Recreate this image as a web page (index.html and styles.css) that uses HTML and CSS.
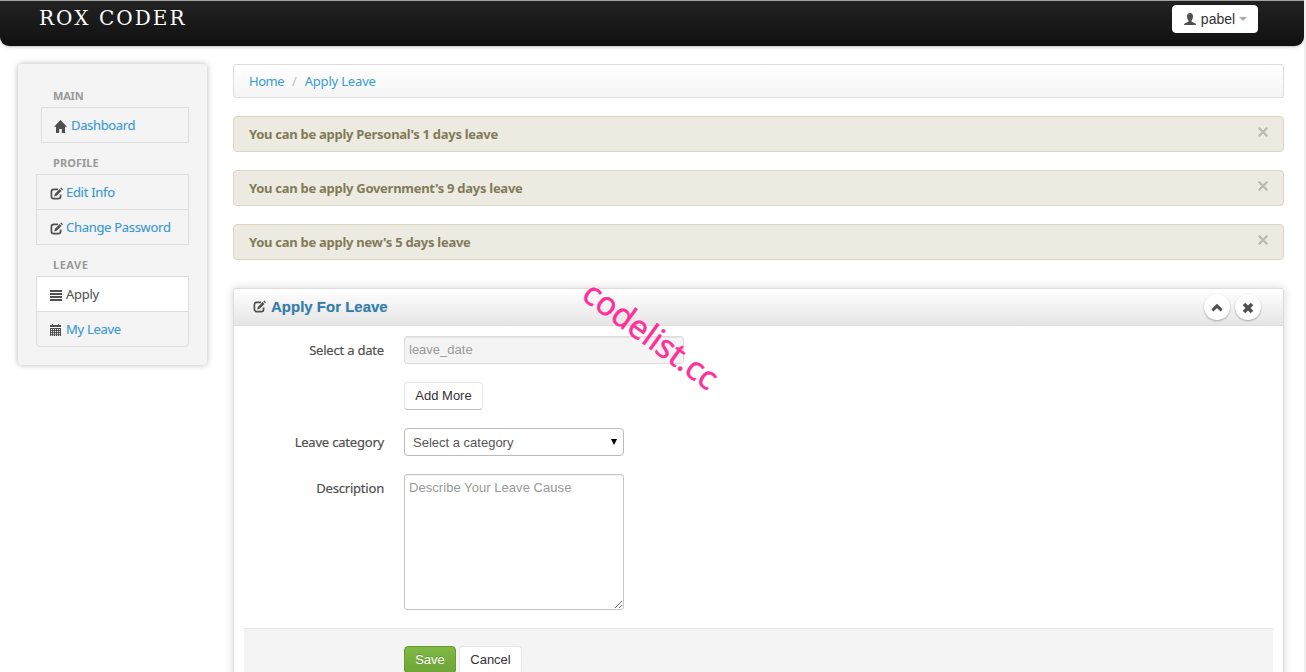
FILE: index.html
```html
<!DOCTYPE html>
<html lang="en">
<head>
<meta charset="utf-8">
<title>Apply Leave</title>
<link rel="stylesheet" href="styles.css">
</head>
<body>
<svg class="defs" width="0" height="0">
  <symbol id="edit" viewBox="0 0 14 14"><path d="M8 2.400H3.800Q1.400 2.400 1.400 4.800v4.400q0 2.400 2.400 2.400h4.400q2.400 0 2.400-2.400V7.500" fill="none" stroke="currentColor" stroke-width="1.700"/><path d="M4.200 9.500l.6-2.500 4.900-4.900 1.800 1.800-4.900 4.900zM10.300 1.400l.9-.9 1.800 1.800-.9.900z" fill="currentColor"/></symbol>
  <symbol id="home" viewBox="0 0 14 14"><path d="M6.500 0L13 6.800h-2V13H7.800V9H5.200v4H2V6.800H0z" fill="currentColor"/></symbol>
  <symbol id="list" viewBox="0 0 14 14"><path d="M0 1h12v2H0zM0 4h12v2H0zM0 7h12v2H0zM0 10h12v2H0z" fill="currentColor"/></symbol>
  <symbol id="calendar" viewBox="0 0 14 14"><path d="M0 1h2V0h1v1h5V0h1v1h2v2H0zM0 4h11v8H0z" fill="currentColor"/><path d="M1 5.500h9M1 7.500h9M1 9.500h9M1 11.300h9" stroke="#f4f4f4" stroke-width="1" stroke-dasharray="1 1"/></symbol>
  <symbol id="user" viewBox="0 0 14 14"><path d="M3 3.500Q3 0 6 0t3 3.500Q9 6 7.600 7.500v1.300l3.400 1.400q1 .4 1 1.800H0q0-1.400 1-1.800l3.400-1.400V7.500Q3 6 3 3.500z" fill="currentColor"/></symbol>
  <symbol id="up" viewBox="0 0 14 14"><path d="M2.400 9.300L7 4.900l4.600 4.400" fill="none" stroke="currentColor" stroke-width="3"/></symbol>
  <symbol id="remove" viewBox="0 0 14 14"><path d="M3 3l8 8M11 3l-8 8" fill="none" stroke="currentColor" stroke-width="3.700"/></symbol>
  <symbol id="close" viewBox="0 0 10 10"><path d="M.7.700l8.600 8.600M9.300.7L.7 9.300" fill="none" stroke="currentColor" stroke-width="2.200"/></symbol>
</svg>
<div class="page">
  <header class="navbar">
    <a class="brand">ROX CODER</a>
    <button class="btn user-btn"><svg class="icon"><use href="#user"/></svg><span>pabel</span><i class="caret"></i></button>
  </header>
  <div class="columns">
    <nav class="sidebar">
      <h6>MAIN</h6>
      <ul class="menu inset"><li><a class="w-dash"><svg class="icon"><use href="#home"/></svg>Dashboard</a></li></ul>
      <h6 class="wide">PROFILE</h6>
      <ul class="menu">
        <li><a><svg class="icon"><use href="#edit"/></svg>Edit Info</a></li>
        <li><a><svg class="icon"><use href="#edit"/></svg>Change Password</a></li>
      </ul>
      <h6 class="wider">LEAVE</h6>
      <ul class="menu last">
        <li class="active"><a><svg class="icon"><use href="#list"/></svg>Apply</a></li>
        <li><a><svg class="icon"><use href="#calendar"/></svg>My Leave</a></li>
      </ul>
    </nav>
    <main class="content">
      <div class="breadcrumb"><a class="crumb-home">Home</a><span>/</span><a>Apply Leave</a></div>
      <div class="alert"><strong>You can be apply Personal's 1 days leave</strong><svg class="close"><use href="#close"/></svg></div>
      <div class="alert"><strong>You can be apply Government's 9 days leave</strong><svg class="close"><use href="#close"/></svg></div>
      <div class="alert"><strong>You can be apply new's 5 days leave</strong><svg class="close"><use href="#close"/></svg></div>
      <section class="box">
        <div class="box-header">
          <h2><svg class="icon"><use href="#edit"/></svg>Apply For Leave</h2>
          <div class="box-tools"><button class="round"><svg class="icon"><use href="#up"/></svg></button><button class="round"><svg class="icon"><use href="#remove"/></svg></button></div>
        </div>
        <form class="form">
          <div class="row"><label>Select a date</label><input class="field date" placeholder="leave_date" readonly></div>
          <div class="row"><label></label><button type="button" class="btn add">Add More</button></div>
          <div class="row"><label>Leave category</label><div class="field select"><span>Select a category</span><i class="arrow"></i></div></div>
          <div class="row"><label>Description</label><textarea class="field area" placeholder="Describe Your Leave Cause"></textarea></div>
          <div class="actions"><button type="button" class="btn save">Save</button><button type="button" class="btn cancel">Cancel</button></div>
        </form>
      </section>
    </main>
  </div>
  <div class="watermark">codelist.cc</div>
</div>
</body>
</html>
```
FILE: styles.css
```css
* { box-sizing: border-box; }
html { overflow: hidden; background: #f0f0f0; }
body { margin: 0; height: 672px; overflow: hidden; font: 13px/18px "Noto Sans", sans-serif; color: #555; }
.defs { position: absolute; }
.page { position: relative; width: 1304px; height: 672px; overflow: hidden; background: #fff; border-top: 1px solid #a3a3a3; }
.icon { width: 14px; height: 14px; flex: none; color: #505050; }
.navbar { display: flex; justify-content: space-between; align-items: flex-start; height: 45px; padding: 4px 46px 0 39px; background: linear-gradient(#222, #111); border-radius: 0 0 9px 9px; box-shadow: 0 1px 3px rgba(0,0,0,.25), inset 0 -1px 0 rgba(0,0,0,.1); }
.brand { font: 20px/26px "DejaVu Serif", serif; letter-spacing: 2.05px; color: #fff; }
.btn { display: flex; align-items: center; justify-content: center; height: 28px; padding: 0; border: 1px solid #e6e6e6; border-bottom-color: #bfbfbf; border-radius: 4px; background: #fff; color: #333; font: 13px/18px "Liberation Sans", sans-serif; }
.user-btn { width: 86px; border-color: #fff; font-size: 14px; }
.user-btn .icon { margin: 2px 3px 0 1px; }
.caret { margin: -1px 0 0 4px; border: 4px solid transparent; border-top-color: #aaa; border-bottom: 0; }
.columns { display: flex; align-items: flex-start; gap: 26px; padding: 18px 20px 0 18px; }
.sidebar { width: 189px; height: 301px; padding: 23px 18px 0; border-radius: 4px; background: #f4f4f4; box-shadow: 0 0 6px rgba(0,0,0,.28); }
.sidebar h6 { margin: 0; padding-left: 17px; font: bold 11px/18px "Noto Sans", sans-serif; color: #999; letter-spacing: -.2px; }
.sidebar .wide { letter-spacing: .05px; }
.sidebar .wider { letter-spacing: .5px; }
.menu { margin: 2px 0 11px; padding: 0; list-style: none; border: 1px solid #ddd; }
.menu.inset { margin-left: 5px; }
.menu.last { border-radius: 0 0 4px 4px; }
.menu li { height: 34px; padding-left: 13px; display: flex; align-items: center; }
.menu.inset li { padding-left: 12px; }
.menu li + li { height: 35px; border-top: 1px solid #ddd; }
.menu a { display: flex; align-items: center; gap: 2px; color: #369bd7; letter-spacing: -.3px; text-shadow: 0 0 1px rgba(0,0,0,.12); }
.menu .icon { margin: 3px 0 0; }
.menu .w-dash { gap: 3px; letter-spacing: -.35px; }
.menu .active { background: #fff; }
.menu .active a { color: #555; }
.content { width: 1051px; }
.breadcrumb { display: flex; height: 34px; padding: 7px 15px; margin-bottom: 18px; border: 1px solid #ddd; border-radius: 3px; background: linear-gradient(#fff, #f5f5f5); letter-spacing: -.18px; }
.breadcrumb a { color: #369bd7; }
.crumb-home { letter-spacing: -.5px; }
.breadcrumb span { margin: 0 8px; color: #bbb; }
.alert { display: flex; justify-content: space-between; height: 36px; padding: 8px 15px; margin-bottom: 18px; border: 1px solid #dcd7c3; border-radius: 4px; background: #eceae1; color: #817b58; letter-spacing: -.28px; }
.close { width: 10px; height: 10px; margin: 2px 0 0; color: #bab9b2; }
.box { height: 500px; margin-top: 28px; border: 1px solid #ddd; border-radius: 3px; background: #fff; box-shadow: 0 0 10px rgba(0,0,0,.16); }
.box-header { display: flex; justify-content: space-between; height: 37px; border-bottom: 1px solid #ddd; border-radius: 3px 3px 0 0; background: linear-gradient(#fff, #e5e5e5); padding: 0 22px 0 19px; }
.box-header h2 { display: flex; align-items: center; gap: 4px; height: 35px; margin: 0; font: bold 15px/18px "Liberation Sans", sans-serif; color: #317eac; text-shadow: 0 0 1px rgba(0,0,0,.2); }
.box-tools { display: flex; gap: 5px; padding-top: 5px; }
.round { display: flex; align-items: center; justify-content: center; width: 26px; height: 26px; padding: 1px 0 0; border: 0; border-radius: 50%; background: #fff; box-shadow: 0 1px 2px rgba(0,0,0,.3); }
.form { padding: 10px 10px 0; }
.row { display: flex; margin-bottom: 18px; }
.row label { width: 140px; margin-right: 20px; padding-top: 5px; text-align: right; letter-spacing: -.2px; color: #505050; -webkit-text-stroke: .2px #505050; }
.field { margin: 0; height: 28px; padding: 4px; border: 1px solid #bbb; border-radius: 3px; background: #fff; font: 13px/18px "Liberation Sans", sans-serif; color: #555; }
.field::placeholder { color: #999; opacity: 1; }
.date { width: 280px; padding: 3px 4px 5px; border-color: #ddd; background: #f4f4f4; box-shadow: inset 0 1px 1px rgba(0,0,0,.07); }
.add { width: 79px; }
.select { display: flex; align-items: center; justify-content: space-between; width: 220px; padding: 1px 6px 0 8px; border-radius: 4px; }
.arrow { border: 3.5px solid transparent; border-top: 6px solid #000; border-bottom: 0; margin-top: -1px; }
.area { width: 220px; height: 136px; resize: both; border-color: #c6c6c6; box-shadow: inset 0 1px 1px rgba(0,0,0,.07); letter-spacing: .05px; }
.actions { display: flex; gap: 3px; height: 70px; padding: 17px 160px; border-top: 1px solid #e5e5e5; background: #f4f4f4; }
.save { width: 52px; border-color: #669c2f; background: linear-gradient(#80b944, #6da436); color: #fff; text-shadow: 0 -1px 0 rgba(0,0,0,.2); }
.cancel { width: 63px; }
.watermark { position: absolute; left: 551px; top: 314px; width: 200px; text-align: center; font: 33px/40px "Noto Sans", sans-serif; letter-spacing: -.2px; color: #ff2e99; transform: rotate(36deg); -webkit-text-stroke: .4px #ff2e99; }
```
